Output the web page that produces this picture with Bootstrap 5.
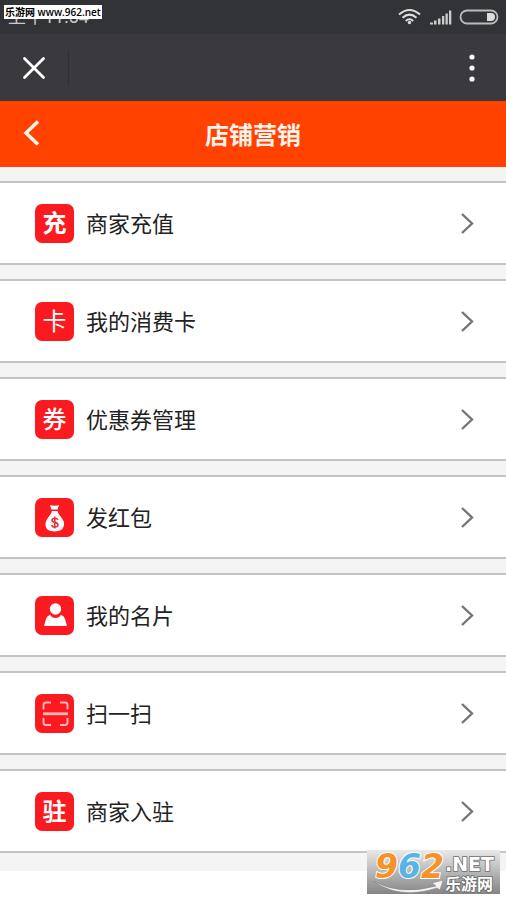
<!DOCTYPE html>
<html lang="zh-CN">
<head>
<meta charset="utf-8">
<meta name="viewport" content="width=device-width, initial-scale=1">
<title>店铺营销</title>
<link href="https://cdn.jsdelivr.net/npm/bootstrap@5.3.0/dist/css/bootstrap.min.css" rel="stylesheet">
<style>
  body { font-family: "Noto Sans CJK SC", sans-serif; background: #fff; color: #222; }
  svg { display: block; flex-shrink: 0; }
  .status-bar { height: 34px; background: #323337; padding: 0 7px 0 8px; overflow: hidden; }
  .status-time { font-family: Roboto, "Noto Sans CJK SC", sans-serif; font-size: 18px; line-height: 34px; color: #c9cacc; }
  .site-tag { top: 5px; left: 4px; height: 14px; background: #fff; color: #000; font: 600 10px/14px "Open Sans", "Noto Sans CJK SC", sans-serif; white-space: nowrap; padding: 0 1px; }
  .web-bar { height: 67px; background: #39393e; padding: 0 20px; }
  .web-divider { width: 1px; height: 36px; background: #303034; }
  .bare { background: none; border: 0; padding: 0; }
  .title-bar { height: 66px; background: #ff4200; color: #fff3ec; }
  .title-bar h1 { font-size: 24px; line-height: 32px; font-weight: 700; }
  .title-side { width: 64px; padding-left: 23px; }
  .title-side svg { margin-top: 3px; }
  .menu { background: #f4f4f4; padding: 14px 0 18px; gap: 14px; }
  .menu-row { height: 84px; background: #fff; border: solid #c4c4c4; border-width: 2px 0; padding: 0 32px 0 35px; color: #222; font-size: 22px; line-height: 32px; gap: 12px; }
  .menu-label { padding-bottom: 2px; }
  .tile { width: 39px; height: 39px; border-radius: 7px; background: #fb1a20; color: #fff; flex-shrink: 0; font-size: 24px; line-height: 36px; font-weight: 700; }
  .tile-light { font-weight: 400; }
  .tile-medium { font-weight: 500; }
  .brand { right: 6px; top: 850px; width: 133px; height: 44px; background: linear-gradient(#e9e9e9, #858585); }
</style>
</head>
<body class="position-relative min-vh-100">
<header>
  <div class="status-bar d-flex align-items-center justify-content-between position-relative">
    <span class="status-time">上午11:54</span>
    <span class="site-tag position-absolute">乐游网 www.962.net</span>
    <svg width="101" height="20" viewBox="398 7 101 20" fill="none" aria-hidden="true">
      <g stroke="#ddd" stroke-width="2">
        <path d="M399 14.5Q409.500 5.500 420 14.500M402.500 17.800Q409.500 11.500 416.500 17.800M405.800 21Q409.500 17.500 413.200 21"/>
      </g>
      <circle cx="409.500" cy="22.500" r="1.700" fill="#ddd"/>
      <path fill="#ccc" d="M430 22.500h3v2h-3zM434 20.500h2.500v4H434zM438 18.500h2.500v6H438zM442 16h2.300v8.500H442zM445.500 13.500h2.300v11h-2.300zM449 10.500h2.300v14H449z"/>
      <rect x="460.500" y="10.500" width="37" height="13" rx="6.500" stroke="#bbb" stroke-width="1.800"/>
      <path d="M487 13h4a4 4 0 0 1 0 8h-4z" fill="#ddd"/>
    </svg>
  </div>
  <div class="web-bar d-flex align-items-center justify-content-between">
    <div class="d-flex align-items-center gap-3">
      <button class="bare" type="button" aria-label="关闭">
        <svg width="28" height="28" fill="none" stroke="#fff" stroke-width="2.800" stroke-linecap="round"><path d="M4.500 4.500l19 19M23.500 4.500l-19 19"/></svg>
      </button>
      <span class="web-divider ms-1"></span>
    </div>
    <button class="bare" type="button" aria-label="更多">
      <svg width="28" height="32" fill="#fff"><circle cx="14" cy="5" r="2.600"/><circle cx="14" cy="16" r="2.600"/><circle cx="14" cy="27" r="2.600"/></svg>
    </button>
  </div>
  <div class="title-bar d-flex align-items-center">
    <div class="title-side">
      <button class="bare" type="button" aria-label="返回">
        <svg width="17" height="26" fill="none" stroke="#fff3ec" stroke-width="3.500"><path d="M15 1.500L3 13l12 11.500"/></svg>
      </button>
    </div>
    <h1 class="flex-fill text-center m-0">店铺营销</h1>
    <div class="title-side"></div>
  </div>
</header>
<main>
  <nav class="menu d-flex flex-column" aria-label="店铺营销">
    <a href="#" class="menu-row d-flex align-items-center text-decoration-none">
      <span class="tile text-center" aria-hidden="true">充</span><span class="menu-label flex-fill">商家充值</span>
      <svg width="14" height="22" fill="none" stroke="#757575" stroke-width="2.400"><path d="M2 2l10 9.500L2 21"/></svg>
    </a>
    <a href="#" class="menu-row d-flex align-items-center text-decoration-none">
      <span class="tile tile-light text-center" aria-hidden="true">卡</span><span class="menu-label flex-fill">我的消费卡</span>
      <svg width="14" height="22" fill="none" stroke="#757575" stroke-width="2.400"><path d="M2 2l10 9.500L2 21"/></svg>
    </a>
    <a href="#" class="menu-row d-flex align-items-center text-decoration-none">
      <span class="tile tile-medium text-center" aria-hidden="true">券</span><span class="menu-label flex-fill">优惠券管理</span>
      <svg width="14" height="22" fill="none" stroke="#757575" stroke-width="2.400"><path d="M2 2l10 9.500L2 21"/></svg>
    </a>
    <a href="#" class="menu-row d-flex align-items-center text-decoration-none">
      <span class="tile" aria-hidden="true">
        <svg width="39" height="39"><path fill="#fff" d="M15 7q5 1.500 9 0l-1.500 4.500h-6zM17 13h5.500q.5 3 3.500 6 3.500 4 3 8-.8 6.500-9.500 6.500T10.500 27q-.3-4 3-8 3-3 3.500-6z"/><path d="M23 22q-.8-1.800-3.200-1.800-2.800 0-2.800 2 0 1.700 2.800 2.200 3.200.5 3.200 2.600 0 2-3.200 2-2.600 0-3.200-2M19.800 18.500v12" fill="none" stroke="#e8343a" stroke-width="1.600"/></svg>
      </span><span class="menu-label flex-fill">发红包</span>
      <svg width="14" height="22" fill="none" stroke="#757575" stroke-width="2.400"><path d="M2 2l10 9.500L2 21"/></svg>
    </a>
    <a href="#" class="menu-row d-flex align-items-center text-decoration-none">
      <span class="tile" aria-hidden="true">
        <svg width="39" height="39" fill="#fff"><circle cx="20.500" cy="13" r="5.700"/><path d="M9 30l2-7q.8-3 4-4.300 2 3.300 5.500 3.300t5.500-3.300q3.200 1.300 4 4.300l2 7z"/></svg>
      </span><span class="menu-label flex-fill">我的名片</span>
      <svg width="14" height="22" fill="none" stroke="#757575" stroke-width="2.400"><path d="M2 2l10 9.500L2 21"/></svg>
    </a>
    <a href="#" class="menu-row d-flex align-items-center text-decoration-none">
      <span class="tile" aria-hidden="true">
        <svg width="39" height="39" fill="none" stroke="#ffb9ba" stroke-width="1.900"><path d="M8.500 15.500V11q0-2.500 2.500-2.500h5M25 8.500h5q2.500 0 2.500 2.500v4.500M8.500 24v4.500Q8.500 31 11 31h5M25 31h5q2.500 0 2.500-2.500V24"/><path d="M8 19.800h25" stroke-width="2.800"/></svg>
      </span><span class="menu-label flex-fill">扫一扫</span>
      <svg width="14" height="22" fill="none" stroke="#757575" stroke-width="2.400"><path d="M2 2l10 9.500L2 21"/></svg>
    </a>
    <a href="#" class="menu-row d-flex align-items-center text-decoration-none">
      <span class="tile text-center" aria-hidden="true">驻</span><span class="menu-label flex-fill">商家入驻</span>
      <svg width="14" height="22" fill="none" stroke="#757575" stroke-width="2.400"><path d="M2 2l10 9.500L2 21"/></svg>
    </a>
  </nav>
</main>
<div class="brand position-absolute">
  <svg width="133" height="44" role="img" aria-label="962.NET 乐游网">
    <path d="M6 31Q33 46 69 36l-4-3 11-3-3 10-3-2Q33 50 6 31z" fill="#f4f4f4" stroke="#888" stroke-width=".6"/>
    <g font-family="DejaVu Sans, sans-serif" font-weight="700" font-style="italic" font-size="33" stroke="#fff" stroke-width="2" paint-order="stroke">
      <text x="8" y="28" fill="#f5922b">9</text><text x="31" y="28" fill="#59b4e6">6</text><text x="54" y="28" fill="#f5922b">2</text>
    </g>
    <g fill="#fff" stroke="#6d6d6d" stroke-width="1.600" paint-order="stroke">
      <text x="78" y="21" font-family="DejaVu Sans, sans-serif" font-weight="700" font-size="19">.NET</text>
      <text x="78" y="40" font-family="Noto Sans CJK SC, sans-serif" font-weight="700" font-size="16">乐游网</text>
    </g>
  </svg>
</div>
<script src="https://cdn.jsdelivr.net/npm/bootstrap@5.3.0/dist/js/bootstrap.bundle.min.js"></script>
</body>
</html>
